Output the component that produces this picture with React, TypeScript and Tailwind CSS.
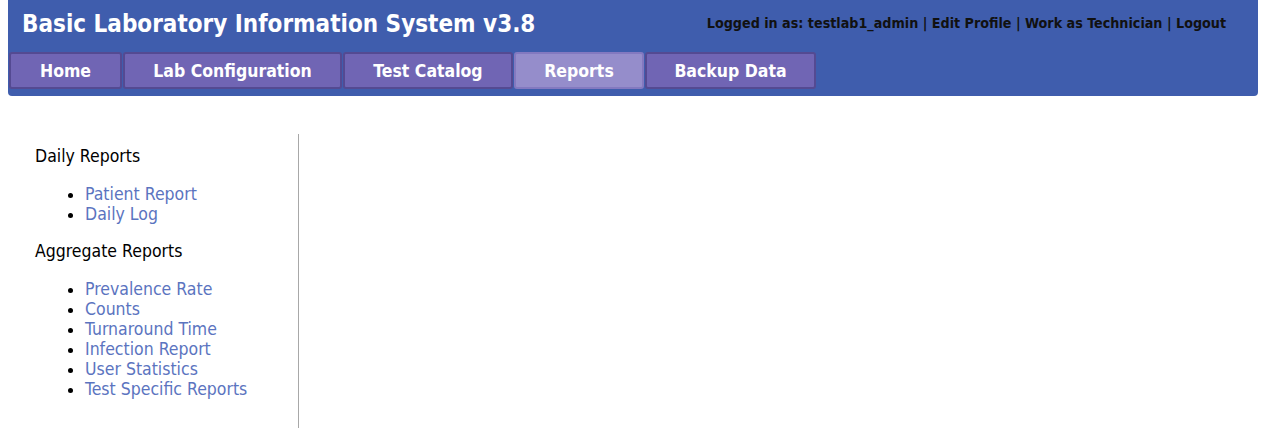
const tabs = ['Home', 'Lab Configuration', 'Test Catalog', 'Reports', 'Backup Data'];
const tabWidths = ['w-[113px]', 'w-[219px]', 'w-[170px]', 'w-[130px]', 'w-[171px]'];

const dailyReports = ['Patient Report', 'Daily Log'];
const aggregateReports = [
  'Prevalence Rate',
  'Counts',
  'Turnaround Time',
  'Infection Report',
  'User Statistics',
  'Test Specific Reports',
];

const ReportList = ({ items }: { items: string[] }) => (
  <ul className="list-disc pl-[50px] mt-[18px] mb-[17px] text-[17.5px] leading-[20px] marker:text-black">
    {items.map((item) => (
      <li key={item} className="text-[#5b74c0]">
        <a href="#" className="text-[#5b74c0]">{item}</a>
      </li>
    ))}
  </ul>
);

export default function App() {
  return (
    <div className="min-h-screen bg-white font-['DejaVu_Sans_Condensed','DejaVu_Sans',sans-serif] text-black">
      {/* Header */}
      <div className="mx-2 h-[96px] bg-[#3f5dad] rounded-b-[4px] pl-px">
        <div className="flex items-start justify-between h-[52px]">
          <h1 className="pl-[13px] pt-[6px] text-[24px] font-bold text-white leading-[36px]">
            Basic Laboratory Information System v3.8
          </h1>
          <div className="pt-[14px] pr-[32px] text-[14.2px] leading-[18px] font-bold text-[#111]">
            Logged in as: testlab1_admin | Edit Profile | Work as Technician | Logout
          </div>
        </div>
        <div className="flex gap-px">
          {tabs.map((tab, idx) => (
            <div
              key={tab}
              className={`${tabWidths[idx]} h-[37px] flex items-center justify-center pt-[2px] rounded-[3px] border-2 text-[17.5px] font-bold text-white ${
                tab === 'Reports'
                  ? 'bg-[#958dcb] border-[#8379c0]'
                  : 'bg-[#7065b4] border-[#544a92]'
              }`}
            >
              {tab}
            </div>
          ))}
        </div>
      </div>

      {/* Body */}
      <div className="flex mt-[38px]">
        <div className="w-[299px] h-[294px] border-r border-[#a8a8a8] pl-[35px] pt-[12px] text-[17.5px] leading-[20px]">
          <div>Daily Reports</div>
          <ReportList items={dailyReports} />
          <div>Aggregate Reports</div>
          <ReportList items={aggregateReports} />
        </div>
        <div className="flex-1" />
      </div>
    </div>
  );
}
